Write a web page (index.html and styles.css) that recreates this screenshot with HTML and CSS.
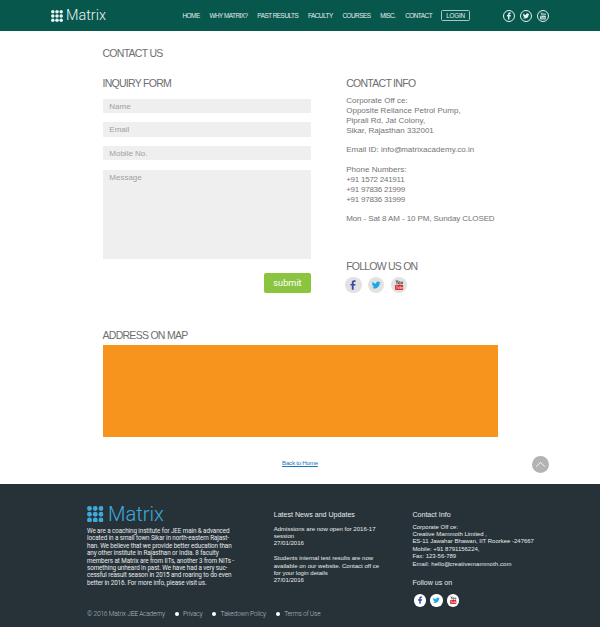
FILE: index.html
```
<!DOCTYPE html>
<html lang="en">
<head>
<meta charset="utf-8">
<title>Matrix - Contact Us</title>
<link rel="stylesheet" href="styles.css">
</head>
<body>
<svg class="defs" aria-hidden="true">
  <symbol id="dots" viewBox="0 0 16 16">
    <g fill="currentColor">
      <circle cx="2.4" cy="2.4" r="2.35"/><circle cx="8" cy="2.4" r="2.35"/><circle cx="13.6" cy="2.4" r="2.35"/>
      <circle cx="2.4" cy="8" r="2.35"/><circle cx="8" cy="8" r="2.35"/><circle cx="13.6" cy="8" r="2.35"/>
      <circle cx="2.4" cy="13.6" r="2.35"/><circle cx="8" cy="13.6" r="2.35"/><circle cx="13.6" cy="13.6" r="2.35"/>
    </g>
  </symbol>
  <symbol id="fb" viewBox="0 0 16 16">
    <path fill="currentColor" d="M6.7 12.6V8.5H5.3V6.8h1.4V5.6c0-1.5.9-2.3 2.2-2.3h1.5v1.6h-.9c-.7 0-.9.3-.9.9v1h1.8l-.2 1.7H8.6v4.1z"/>
  </symbol>
  <symbol id="tw" viewBox="0 0 16 16">
    <path fill="currentColor" d="M12.4 5.3c-.3.1-.6.2-1 .3.4-.2.6-.6.8-1-.4.2-.7.3-1.1.4a1.8 1.8 0 0 0-3.1 1.6C6.5 6.5 5.2 5.8 4.3 4.7c-.5.8-.2 1.8.6 2.3-.3 0-.6-.1-.8-.2 0 .9.6 1.6 1.4 1.8-.2.1-.5.1-.8 0 .2.7.9 1.2 1.7 1.2-.7.6-1.6.9-2.7.8.8.5 1.7.8 2.7.8 3.3 0 5.2-2.7 5.1-5.2.4-.2.7-.5.9-.9z"/>
  </symbol>
  <symbol id="yt" viewBox="0 0 16 16">
    <path class="yt-word" fill="none" stroke-width=".9" d="M5 3.3l.9 1.8M6.8 3.3L5.9 5.1v1.7M8.8 6.3a.7.7 0 0 1-1.4 0v-1a.7.7 0 0 1 1.4 0zM10 4.6v1.7c0 .5.9.5 1.2 0M11.2 4.6v2.2"/>
    <rect class="yt-box" x="4" y="7.7" width="8" height="5.1" rx="1"/>
    <path class="yt-cut" fill="none" stroke-width=".6" d="M5 9h1.6M5.8 9v2.8M7.1 9.8v1.7h.9V9.8M9 8.9v2.7h.7V10H9M11.3 11.4h-.8v-1.5h.8v.8h-.8"/>
  </symbol>
</svg>

<header class="top">
  <a class="brand"><svg><use href="#dots"/></svg><span>Matrix</span></a>
  <nav class="nav">
    <a>HOME</a><a>WHY MATRIX?</a><a>PAST RESULTS</a><a>FACULTY</a><a>COURSES</a><a>MISC.</a><a>CONTACT</a>
  </nav>
  <a class="login">LOGIN</a>
  <div class="social social-top">
    <a><svg><use href="#fb"/></svg></a><a><svg><use href="#tw"/></svg></a><a class="yt"><svg><use href="#yt"/></svg></a>
  </div>
</header>

<main class="page">
  <h1>CONTACT US</h1>
  <div class="columns">
    <section class="inquiry">
      <h2>INQUIRY FORM</h2>
      <form>
        <div class="field">Name</div>
        <div class="field">Email</div>
        <div class="field">Mobile No.</div>
        <div class="field message">Message</div>
        <div class="submit">submit</div>
      </form>
    </section>
    <section class="info">
      <h2>CONTACT INFO</h2>
      <p>Corporate Off ce:<br>Opposite Reliance Petrol Pump,<br>Piprali Rd, Jat Colony,<br>Sikar, Rajasthan 332001</p>
      <p>Email ID: info<span class="at">@</span>matrixacademy.co.in</p>
      <p>Phone Numbers:<br><span class="num">+91 1572 241911<br>+91 97836 21999<br>+91 97836 31999</span></p>
      <p class="hours">Mon - Sat 8 AM - 10 PM, Sunday CLOSED</p>
      <h2 class="follow">FOLLOW US ON</h2>
      <div class="social social-main">
        <a class="fb"><svg><use href="#fb"/></svg></a><a class="tw"><svg><use href="#tw"/></svg></a><a class="yt"><svg><use href="#yt"/></svg></a>
      </div>
    </section>
  </div>
  <h2 class="map-title">ADDRESS ON MAP</h2>
  <div class="map"></div>
</main>

<div class="return">
  <a class="home-link">Back to Home</a>
  <a class="to-top"><svg viewBox="0 0 17 17"><path d="M4.2 10.6L8.5 6.3l4.3 4.3" fill="none" stroke="#fff" stroke-width=".9"/></svg></a>
</div>

<footer class="footer">
  <div class="footer-columns">
    <section class="about">
      <a class="brand brand-footer"><svg><use href="#dots"/></svg><span>Matrix</span></a>
      <p>We are a coaching institute for JEE main &amp; advanced<br>located in a small town Sikar in north-eastern Rajast-<br>han. We believe that we provide better education than<br>any other institute in Rajasthan or India. 8 faculty<br>members at Matrix are from IITs, another 3 from NITs -<br>something unheard in past. We have had a very suc-<br>cessful reasult season in 2015 and roaring to do even<br>better in 2016. For more info, please visit us.</p>
    </section>
    <section class="news">
      <h3>Latest News and Updates</h3>
      <p>Admissions are now open for 2016-17<br>session<br>27/01/2016</p>
      <p>Students internal test results are now<br>available on our website. Contact off ce<br>for your login details<br>27/01/2016</p>
    </section>
    <section class="reach">
      <h3>Contact Info</h3>
      <p>Corporate Off ce:<br>Creative Mammoth Limited ,<br>ES-11 Jawahar Bhawan, IIT Roorkee -247667<br>Mobile: +91 8791156224,<br>Fax: 123-56-789<br><span class="mail">Email: hello<span class="at">@</span>creativemammoth.com</span></p>
      <h3>Follow us on</h3>
      <div class="social social-footer">
        <a class="fb"><svg><use href="#fb"/></svg></a><a class="tw"><svg><use href="#tw"/></svg></a><a class="yt"><svg><use href="#yt"/></svg></a>
      </div>
    </section>
  </div>
  <div class="legal">
    <span>© 2016 Matrix JEE Academy</span><i></i><a>Privacy</a><i></i><a>Takedown Policy</a><i></i><a>Terms of Use</a>
  </div>
</footer>
</body>
</html>
```
FILE: styles.css
```
* { box-sizing: border-box; }

body {
  margin: 0;
  width: 600px;
  height: 627px;
  overflow: hidden;
  background: #fff;
  font-family: "Liberation Sans", Arial, sans-serif;
  color: #747474;
  white-space: nowrap;
}

h1, h2, h3, p { margin: 0; font-weight: normal; }
svg { display: block; }
.defs { display: none; }

/* Header */
.top {
  display: flex;
  align-items: center;
  height: 30.5px;
  padding: 1px 0 0 51px;
  background: #07574d;
  color: #e3f0ee;
}

.brand {
  display: flex;
  align-items: center;
  width: 131.5px;
  font: 300 14.4px/16px Roboto, sans-serif;
}
.brand svg { width: 12px; height: 12px; margin-right: 3px; }
.top .brand { color: #e9f6f4; }
.top .brand span { padding-top: 1px; }

.nav {
  display: flex;
  gap: 9.7px;
  width: 258.5px;
  font-size: 6.4px;
  letter-spacing: -.5px;
  line-height: 10px;
}

.login {
  width: 29px;
  height: 11px;
  border: 1px solid #a5c9c4;
  border-radius: 1.5px;
  font-size: 6.3px;
  line-height: 10px;
  letter-spacing: -.2px;
  text-align: center;
}

.social { display: flex; }
.social a { display: block; border-radius: 50%; }
.social svg { width: 100%; height: 100%; }
.fb { color: #3b4fa0; }
.tw { color: #1ea6e6; }
.yt-word { stroke: var(--word, #444); }
.yt-box { fill: var(--box, #d9282f); }
.yt-cut { stroke: var(--cut, #f6d0d0); }

.social-top { gap: 5px; margin-left: 32.5px; }
.social-top a { width: 12px; height: 12px; border: 1px solid #e3f0ee; }
.social-top svg { width: 12px; height: 12px; margin: -1px; }
.social-top .yt { --word: #cfe3e0; --box: #cfe3e0; --cut: #4a8880; }

/* Contact page */
.page { padding: 16px 102.5px 0; }

h1, h2 {
  font-size: 10.5px;
  line-height: 12px;
  letter-spacing: -.72px;
  color: #6d6e70;
}

.columns { display: flex; margin-top: 18px; height: 252px; }
.inquiry { width: 208.5px; }

form { padding-top: 10.1px; }
.field {
  height: 14.3px;
  margin-bottom: 9.4px;
  padding-left: 6.8px;
  background: #efefef;
  color: #a0a0a0;
  font-size: 8px;
  line-height: 15px;
}
.message { height: 89.2px; margin-bottom: 13.8px; }
.submit {
  width: 47px;
  height: 20.5px;
  margin-left: auto;
  border-radius: 2px;
  background: #8bc53f;
  color: #fff;
  font: 9.2px/20px Roboto, sans-serif;
  text-align: center;
}

.info { margin-left: 35.2px; }
.info h2 { margin-bottom: 7.8px; }
.info p {
  margin-bottom: 9.83px;
  font-size: 8px;
  line-height: 9.83px;
  letter-spacing: .02px;
}
.info .num { letter-spacing: -.25px; }
.info .hours { letter-spacing: -.1px; }
.at { letter-spacing: -1px; }
.info .follow { margin: 36px 0 4.7px; letter-spacing: -.78px; }

.social-main { gap: 6.5px; margin-left: -.8px; }
.social-main a { width: 16.2px; height: 16.2px; background: #e2e2e2; }

.map { height: 92px; margin-top: 4.5px; background: #f7941e; }

/* Return links */
.return {
  display: flex;
  align-items: center;
  height: 46.5px;
  padding: 8px 0 0 282px;
}
.home-link {
  width: 250px;
  margin-top: -4px;
  color: #1b75bb;
  font-size: 6.2px;
  letter-spacing: -.25px;
  text-decoration: underline;
}
.to-top { width: 17px; height: 17px; border-radius: 50%; background: #b3b3b3; }

/* Footer */
.footer {
  height: 143.5px;
  background: #263238;
  color: #e6eaec;
}
.footer-columns {
  display: grid;
  grid-template-columns: 186.7px 138.7px auto;
  height: 124px;
  padding: 22px 0 0 87px;
}
.brand-footer { color: #3fa9dc; font-size: 20.2px; line-height: 18px; }
.brand-footer svg { width: 16.5px; height: 16.5px; margin-right: 4.5px; }
.brand-footer span { margin-top: -1px; }
.footer p { font-size: 6.05px; line-height: 7.4px; }
.about p { margin-top: 5.5px; font-family: Roboto, sans-serif; font-size: 6.3px; letter-spacing: -.09px; }
.footer h3 { font-size: 7.1px; line-height: 8px; }
.news h3, .reach h3 { margin-top: 5.5px; }
.news p { margin-top: 6.5px; }
.news p + p { margin-top: 7.4px; }
.reach p { margin-top: 4.5px; font-size: 5.98px; }
.reach .mail { letter-spacing: .09px; }
.reach p + h3 { margin-top: 11px; }

.social-footer { gap: 4px; margin: 7.5px 0 0 1.2px; }
.social-footer a { width: 12.5px; height: 12.5px; background: #fff; }

.legal {
  display: flex;
  align-items: center;
  height: 12px;
  padding-left: 87px;
  color: #b6bdc1;
  font: 300 6.6px/12px Roboto, sans-serif;
  letter-spacing: -.2px;
}
.legal i { width: 4px; height: 4px; margin: 0 4.4px 0 9.7px; border-radius: 50%; background: #fff; }
```
